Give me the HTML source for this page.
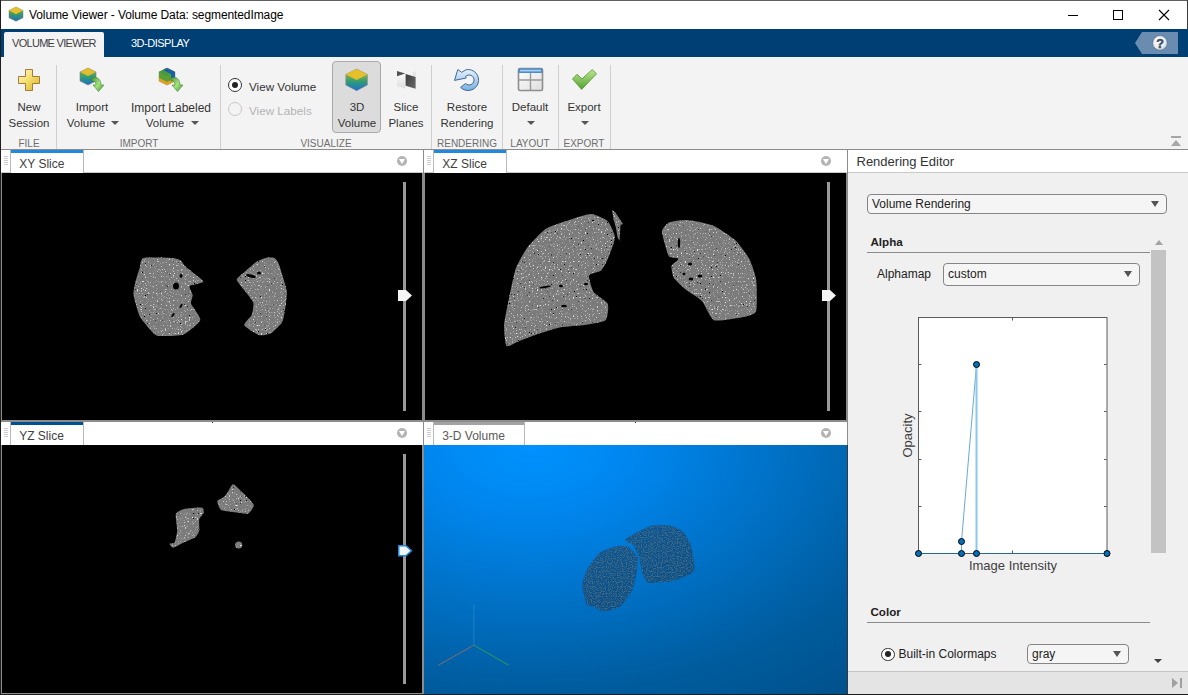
<!DOCTYPE html>
<html><head><meta charset="utf-8">
<style>
*{margin:0;padding:0;box-sizing:border-box}
html,body{width:1188px;height:695px;overflow:hidden;background:#fff;font-family:"Liberation Sans",sans-serif}
.a{position:absolute}
.t{position:absolute;white-space:nowrap;line-height:1}
.sep{position:absolute;width:1px;background:#cfcfcf;top:65px;height:84px}
.rl{position:absolute;white-space:nowrap;line-height:1;font-size:11.5px;color:#333;text-align:center}
.gl{position:absolute;white-space:nowrap;line-height:1;font-size:10px;color:#6e6e6e;text-align:center;letter-spacing:0}
.arr{position:absolute;width:0;height:0;border-left:4px solid transparent;border-right:4px solid transparent;border-top:4px solid #555}
.hdr{position:absolute;background:#fff;border-bottom:1px solid #c9c9c9}
.grip{position:absolute;width:4px;height:9px;background:repeating-linear-gradient(#cdcdcd 0 1px,transparent 1px 2px)}
.tab{position:absolute;background:#fff;border-left:1px solid #b9b9b9;border-right:1px solid #b9b9b9}
.tabbar{position:absolute;left:0;right:0;top:0;height:3px}
.ddc{position:absolute;width:10px;height:10px;border-radius:50%;background:#b4b4b4}
.ddc:after{content:"";position:absolute;left:2px;top:3px;border-left:3px solid transparent;border-right:3px solid transparent;border-top:5px solid #fff}
.trk{position:absolute;width:3px;background:#999}
</style></head>
<body>
<!-- window borders -->
<div class="a" style="left:0;top:0;width:1188px;height:1px;background:#5f5f5f"></div>
<div class="a" style="left:0;top:0;width:1px;height:695px;background:#1e1e1e"></div>
<div class="a" style="left:1187px;top:0;width:1px;height:29px;background:#3a3a3a"></div>
<div class="a" style="left:0;top:694px;width:1188px;height:1px;background:#1e1e1e"></div>

<!-- title bar -->
<svg class="a" style="left:8px;top:6px" width="16" height="16" viewBox="0 0 16 16">
 <defs>
  <linearGradient id="cg" x1="0" y1="0" x2="0" y2="1"><stop offset="0" stop-color="#7fb33a"/><stop offset="0.5" stop-color="#3a9a6a"/><stop offset="1" stop-color="#1a6fc0"/></linearGradient>
 </defs>
 <polygon points="8,1 15,4.6 15,11.8 8,15.2 1,11.8 1,4.6" fill="url(#cg)" stroke="#8a7a6a" stroke-width="0.5"/>
 <polygon points="8,1 15,4.6 8,8.3 1,4.6" fill="#e6bf2a"/>
</svg>
<div class="t" style="left:29px;top:8.6px;font-size:12px;color:#000;letter-spacing:-0.1px">Volume Viewer - Volume Data: segmentedImage</div>
<div class="a" style="left:1068px;top:15px;width:10px;height:1px;background:#000"></div>
<div class="a" style="left:1113px;top:10px;width:10px;height:10px;border:1px solid #000"></div>
<svg class="a" style="left:1158px;top:9px" width="12" height="12" viewBox="0 0 12 12"><path d="M1,1 L11,11 M11,1 L1,11" stroke="#000" stroke-width="1.1"/></svg>

<!-- tab strip -->
<div class="a" style="left:1px;top:29px;width:1187px;height:28px;background:#003f73"></div>
<div class="a" style="left:4px;top:32px;width:100px;height:25px;background:#f3f3f3;border-radius:2px 2px 0 0"></div>
<div class="t" style="left:12px;top:37.5px;font-size:11px;color:#404040;letter-spacing:-0.7px">VOLUME VIEWER</div>
<div class="t" style="left:131px;top:37.5px;font-size:11px;color:#fff;letter-spacing:-0.5px">3D-DISPLAY</div>
<svg class="a" style="left:1135px;top:32px" width="44" height="22" viewBox="0 0 44 22">
 <polygon points="0,11 7,0 43,0 43,22 7,22" fill="#6a8cb0"/>
 <defs><radialGradient id="hg" cx="0.4" cy="0.35" r="0.7"><stop offset="0" stop-color="#fff"/><stop offset="0.7" stop-color="#e8ecf0"/><stop offset="1" stop-color="#b8c4d0"/></radialGradient></defs>
 <circle cx="25" cy="11" r="7.2" fill="url(#hg)" stroke="#4a5a6a" stroke-width="0.4"/>
 <text x="25" y="15.5" font-family="Liberation Sans" font-weight="bold" font-size="12.5" fill="#3d4f66" stroke="#3d4f66" stroke-width="0.5" text-anchor="middle">?</text>
</svg>

<!-- ribbon -->
<div class="a" style="left:1px;top:57px;width:1187px;height:92px;background:#f3f3f3"></div>
<div class="a" style="left:1px;top:149px;width:1187px;height:1px;background:#8c8c8c"></div>
<!-- separators -->
<div class="sep" style="left:56px"></div>
<div class="sep" style="left:220px"></div>
<div class="sep" style="left:431px"></div>
<div class="sep" style="left:502px"></div>
<div class="sep" style="left:558px"></div>
<div class="sep" style="left:610px"></div>
<!-- 3D volume pressed button -->
<div class="a" style="left:332px;top:61px;width:49px;height:72px;background:#dcdcdc;border:1px solid #a9a9a9;border-radius:4px"></div>

<!-- labels -->
<div class="rl" style="left:-21px;width:100px;top:102.4px">New</div>
<div class="rl" style="left:-21px;width:100px;top:117.9px">Session</div>
<div class="gl" style="left:-21px;width:100px;top:138.6px">FILE</div>

<div class="rl" style="left:42px;width:100px;top:102.4px">Import</div>
<div class="rl" style="left:36px;width:100px;top:117.9px">Volume</div>
<div class="arr" style="left:111px;top:121px"></div>

<div class="rl" style="left:121px;width:100px;top:102.2px;font-size:12px">Import Labeled</div>
<div class="rl" style="left:115px;width:100px;top:117.9px">Volume</div>
<div class="arr" style="left:191px;top:121px"></div>
<div class="gl" style="left:89px;width:100px;top:138.6px">IMPORT</div>

<div class="a" style="left:228px;top:78px;width:14px;height:14px;border-radius:50%;border:1px solid #333;background:#fff"></div>
<div class="a" style="left:232px;top:82px;width:6px;height:6px;border-radius:50%;background:#222"></div>
<div class="t" style="left:249px;top:81.2px;font-size:11.7px;color:#333">View Volume</div>
<div class="a" style="left:228px;top:102px;width:14px;height:14px;border-radius:50%;border:1px solid #c8c8c8;background:#f3f3f3"></div>
<div class="t" style="left:249px;top:105px;font-size:11.7px;color:#b4b4b4">View Labels</div>

<div class="rl" style="left:307px;width:100px;top:102.4px">3D</div>
<div class="rl" style="left:307px;width:100px;top:117.9px">Volume</div>
<div class="rl" style="left:356px;width:100px;top:102.4px">Slice</div>
<div class="rl" style="left:356px;width:100px;top:117.9px">Planes</div>
<div class="gl" style="left:276px;width:100px;top:138.6px">VISUALIZE</div>

<div class="rl" style="left:417px;width:100px;top:102.4px">Restore</div>
<div class="rl" style="left:417px;width:100px;top:117.9px">Rendering</div>
<div class="gl" style="left:417px;width:100px;top:138.6px">RENDERING</div>

<div class="rl" style="left:480px;width:100px;top:102.4px">Default</div>
<div class="arr" style="left:527px;top:121px"></div>
<div class="gl" style="left:480px;width:100px;top:138.6px">LAYOUT</div>

<div class="rl" style="left:534px;width:100px;top:102.4px">Export</div>
<div class="arr" style="left:581px;top:121px"></div>
<div class="gl" style="left:534px;width:100px;top:138.6px">EXPORT</div>

<!-- collapse icon -->
<div class="a" style="left:1171px;top:136px;width:10px;height:2px;background:#a6a6a6"></div>
<div class="a" style="left:1171px;top:140px;border-left:5px solid transparent;border-right:5px solid transparent;border-bottom:6px solid #a6a6a6"></div>

<!-- icons -->
<svg class="a" style="left:17px;top:68px" width="24" height="24" viewBox="0 0 24 24">
 <defs><linearGradient id="pg" x1="0" y1="0" x2="1" y2="1"><stop offset="0" stop-color="#fffbe0"/><stop offset="0.45" stop-color="#f5e070"/><stop offset="1" stop-color="#d9b020"/></linearGradient></defs>
 <path d="M8.5,1.5 H15.5 V8.5 H22.5 V15.5 H15.5 V22.5 H8.5 V15.5 H1.5 V8.5 H8.5 Z" fill="url(#pg)" stroke="#a87a3a" stroke-width="1"/>
</svg>
<svg class="a" style="left:79px;top:66px" width="28" height="28" viewBox="0 0 28 28">
 <defs>
  <linearGradient id="cg2" x1="0" y1="0" x2="0" y2="1"><stop offset="0" stop-color="#8ab83a"/><stop offset="0.55" stop-color="#2f9a7a"/><stop offset="1" stop-color="#1a70c8"/></linearGradient>
  <linearGradient id="ag" x1="0" y1="0" x2="1" y2="1"><stop offset="0" stop-color="#4a9a3a"/><stop offset="0.5" stop-color="#a8e080"/><stop offset="1" stop-color="#3a9a2a"/></linearGradient>
 </defs>
 <polygon points="9,2 17,6 17,15 9,19 1,15 1,6" fill="url(#cg2)" stroke="#8a7a8a" stroke-width="0.6"/>
 <polygon points="9,2 17,6 9,10 1,6" fill="#e3bd2c"/>
 <path d="M13,12 C18,10 22,13 22,19 L25,19 L19.5,25.5 L14,19 L17,19 C17,16 15.5,14.5 13,15 Z" fill="url(#ag)" stroke="#3a8a2a" stroke-width="0.6"/>
</svg>
<svg class="a" style="left:158px;top:66px" width="28" height="28" viewBox="0 0 28 28">
 <polygon points="9,2 17,6 17,15 9,19 1,15 1,6" fill="#d07a1a" stroke="#a08070" stroke-width="0.5"/>
 <polygon points="9,2 17,6 17,12 9,16 1,12 1,6" fill="#5aa03a"/>
 <polygon points="9,2 17,6 9,10 1,6" fill="#4a9a3a"/>
 <polygon points="9,2 17,6 17,12 13,14 13,8 5,4" fill="#1b5fa8"/>
 <polygon points="1,12 9,16 17,12 17,15 9,19 1,15" fill="#e0a020"/>
 <path d="M13,12 C18,10 22,13 22,19 L25,19 L19.5,25.5 L14,19 L17,19 C17,16 15.5,14.5 13,15 Z" fill="url(#ag)" stroke="#3a8a2a" stroke-width="0.6"/>
</svg>
<svg class="a" style="left:345px;top:68px" width="24" height="24" viewBox="0 0 24 24">
 <defs><linearGradient id="cg3" x1="0" y1="0" x2="0" y2="1"><stop offset="0.2" stop-color="#8ab83a"/><stop offset="0.6" stop-color="#2f9a7a"/><stop offset="1" stop-color="#1a6ed0"/></linearGradient></defs>
 <polygon points="11.6,1 22.4,6.5 22.4,17 11.6,22.7 0.8,17 0.8,6.5" fill="url(#cg3)" stroke="#8a7a8a" stroke-width="0.5"/>
 <polygon points="11.6,1 22.4,6.5 11.6,12 0.8,6.5" fill="#e6bf2a"/>
</svg>
<svg class="a" style="left:395px;top:69px" width="22" height="22" viewBox="0 0 22 22">
 <defs><linearGradient id="sp1" x1="0" y1="0" x2="0" y2="1"><stop offset="0" stop-color="#ffffff"/><stop offset="1" stop-color="#dcdcdc"/></linearGradient>
 <linearGradient id="sp2" x1="0" y1="0" x2="1" y2="1"><stop offset="0" stop-color="#3c3c3c"/><stop offset="1" stop-color="#6a6a6a"/></linearGradient></defs>
 <polygon points="17.5,3 21,2.5 21,8.5 17.5,7.5" fill="#e6e6e6"/>
 <polygon points="2,2 10.2,4.5 10.2,19.5 2,17" fill="url(#sp1)"/>
 <polygon points="2,2 10.2,4.5 2,7.2" fill="#505050"/>
 <polygon points="10.6,5 20.6,8 20.6,19.7 10.6,16.7" fill="url(#sp2)"/>
</svg>
<svg class="a" style="left:453px;top:67px" width="27" height="26" viewBox="0 0 27 26">
 <defs><linearGradient id="rg" x1="0" y1="0" x2="0" y2="1"><stop offset="0" stop-color="#e8f2fb"/><stop offset="1" stop-color="#78b0e0"/></linearGradient></defs>
 <path d="M13.2,2.7 A10.5,10.5 0 1 1 7.6,20.4 L12.5,16.5 A5,5 0 1 0 12.5,9.5 L13.2,11 L1.5,13.4 L4.8,2.6 L8.6,5.3 Z" fill="url(#rg)" stroke="#3d6a9a" stroke-width="1" stroke-linejoin="round"/>
</svg>
<svg class="a" style="left:517px;top:67px" width="27" height="25" viewBox="0 0 27 25">
 <defs><linearGradient id="lg" x1="0" y1="0" x2="1" y2="1"><stop offset="0" stop-color="#ffffff"/><stop offset="1" stop-color="#dedede"/></linearGradient></defs>
 <rect x="1.5" y="1.5" width="24" height="22" rx="1.5" fill="url(#lg)" stroke="#8e8e8e" stroke-width="1.6"/>
 <rect x="1.5" y="1.5" width="24" height="4.5" fill="#4d8ccc"/>
 <rect x="3" y="2.8" width="21" height="1.6" fill="#a8d0f0"/>
 <path d="M13.5,6 V23 M1.5,13 H25.5" stroke="#9a9a9a" stroke-width="1.4"/>
</svg>
<svg class="a" style="left:571px;top:68px" width="27" height="23" viewBox="0 0 27 23">
 <defs><linearGradient id="kg" x1="0" y1="0" x2="0" y2="1"><stop offset="0" stop-color="#c0e890"/><stop offset="1" stop-color="#4fa02f"/></linearGradient></defs>
 <path d="M1.5,10.9 L6,6.3 L11,10.9 L21.2,1.6 L25.5,5.8 L10.6,21.4 Z" fill="url(#kg)" stroke="#5a9a3a" stroke-width="0.9" stroke-linejoin="round"/>
</svg>

<!-- panels -->
<div class="a" style="left:1px;top:150px;width:847px;height:544px;background:#8c8c8c"></div>
<!-- headers top -->
<div class="hdr" style="left:1px;top:150px;width:422px;height:23px"></div>
<div class="hdr" style="left:424px;top:150px;width:423px;height:23px"></div>
<!-- headers bottom -->
<div class="hdr" style="left:1px;top:422px;width:422px;height:23px;border-bottom:0"></div>
<div class="hdr" style="left:424px;top:422px;width:423px;height:23px;border-bottom:0"></div>
<!-- image areas -->
<div class="a" id="xy" style="left:2px;top:173px;width:420px;height:247px;background:#000"></div>
<div class="a" id="xz" style="left:425px;top:173px;width:421px;height:247px;background:#000"></div>
<div class="a" id="yz" style="left:2px;top:445px;width:420px;height:248px;background:#000"></div>
<div class="a" id="v3" style="left:424px;top:445px;width:423px;height:249px;background:radial-gradient(ellipse 540px 340px at 105px 0px,#0092ff 0%,#0086ee 20%,#0072c8 45%,#005c9e 72%,#004e86 100%)"></div>
<div class="a" style="left:847px;top:445px;width:1px;height:249px;background:#303a44"></div>
<div class="a" style="left:212px;top:422px;width:1px;height:1px;background:#333"></div>
<div class="a" style="left:635px;top:422px;width:1px;height:1px;background:#333"></div>
<svg class="a" style="left:0;top:0" width="848" height="695" viewBox="0 0 848 695">
 <defs>
  <filter id="spk" x="0" y="0" width="100%" height="100%">
   <feTurbulence type="fractalNoise" baseFrequency="0.75" numOctaves="1" seed="7" result="n"/>
   <feColorMatrix in="n" type="matrix" values="0 0 0 0 0.82  0 0 0 0 0.82  0 0 0 0 0.82  6 0 0 0 -3.55" result="w"/>
   <feComposite in="w" in2="SourceGraphic" operator="in"/>
  </filter>
  <filter id="dspk" x="0" y="0" width="100%" height="100%">
   <feTurbulence type="fractalNoise" baseFrequency="0.8" numOctaves="1" seed="11" result="n"/>
   <feColorMatrix in="n" type="matrix" values="0 0 0 0 0.06  0 0 0 0 0.14  0 0 0 0 0.22  -6 0 0 0 3.2" result="w"/>
   <feComposite in="w" in2="SourceGraphic" operator="in"/>
  </filter>
  <filter id="kspk" x="0" y="0" width="100%" height="100%">
   <feTurbulence type="fractalNoise" baseFrequency="0.55" numOctaves="2" seed="23" result="n"/>
   <feColorMatrix in="n" type="matrix" values="0 0 0 0 0  0 0 0 0 0  0 0 0 0 0  -14 0 0 0 3.5" result="w"/>
   <feComposite in="w" in2="SourceGraphic" operator="in"/>
  </filter>
  <filter id="bspk" x="0" y="0" width="100%" height="100%">
   <feTurbulence type="fractalNoise" baseFrequency="0.7" numOctaves="1" seed="5" result="n"/>
   <feColorMatrix in="n" type="matrix" values="0 0 0 0 0.05  0 0 0 0 0.32  0 0 0 0 0.6  6 0 0 0 -3.6" result="w"/>
   <feComposite in="w" in2="SourceGraphic" operator="in"/>
  </filter>
  <g id="lungs">
   <path d="M143.5,257.9 C146.5,257.0 168.0,257.7 171.5,257.9 C175.0,258.1 179.3,259.4 180.6,260.2 C181.9,261.0 183.1,264.2 185.2,266.2 C187.3,268.2 202.9,279.6 203.3,281.4 C203.7,283.2 190.7,284.6 189.7,285.9 C188.7,287.2 192.6,293.3 192.7,295.0 C192.8,296.7 190.5,301.8 191.2,304.1 C191.9,306.4 201.0,317.2 200.3,320.0 C199.6,322.8 187.6,332.9 183.6,334.4 C179.6,335.9 161.0,336.3 157.9,335.9 C154.8,335.5 152.0,331.6 150.3,329.8 C148.6,328.0 141.3,319.4 139.7,316.2 C138.1,313.0 134.0,298.1 133.6,295.0 C133.2,291.9 134.6,285.4 135.2,282.9 C135.8,280.4 138.9,270.0 139.7,267.7 C140.5,265.4 140.5,258.8 143.5,257.9Z"/>
   <path d="M265.5,257.9 C267.2,257.5 273.2,257.3 274.5,257.9 C275.8,258.5 278.0,261.7 279.1,264.7 C280.2,267.7 286.1,286.4 286.7,290.5 C287.3,294.6 285.6,305.6 285.2,308.6 C284.8,311.6 283.4,320.0 282.1,322.3 C280.8,324.6 273.6,331.7 271.5,332.9 C269.4,334.1 261.9,335.9 259.4,335.2 C256.9,334.5 244.9,327.2 244.2,325.3 C243.5,323.4 251.0,316.8 251.8,314.7 C252.6,312.6 253.9,304.7 253.3,302.6 C252.7,300.5 247.3,294.1 245.8,292.0 C244.3,289.9 236.8,281.6 236.7,279.8 C236.6,278.0 242.4,274.0 244.2,272.3 C246.0,270.6 254.4,263.0 256.4,261.7 C258.4,260.4 263.8,258.3 265.5,257.9Z"/>
   <path d="M506.5,346.1 C505.2,344.6 503.9,329.3 504.1,324.9 C504.3,320.5 507.8,304.3 508.9,299.0 C510.0,293.7 514.1,273.1 515.9,268.3 C517.7,263.5 524.8,250.8 527.7,247.1 C530.6,243.4 542.4,230.9 546.6,228.3 C550.8,225.7 568.3,220.2 572.5,218.9 C576.7,217.6 588.0,213.9 591.3,214.1 C594.6,214.3 605.6,219.0 607.8,221.2 C610.0,223.4 614.9,234.2 614.9,237.7 C614.9,241.2 609.1,255.8 607.8,258.9 C606.5,262.0 602.6,269.2 600.8,270.7 C599.0,272.2 589.7,273.4 589.0,275.4 C588.3,277.4 591.9,289.3 593.7,291.9 C595.5,294.5 606.7,301.1 607.8,303.7 C608.9,306.3 607.7,318.2 605.5,320.2 C603.3,322.2 588.5,324.2 584.3,324.9 C580.1,325.6 565.1,326.4 560.7,327.3 C556.3,328.2 541.1,333.0 537.1,334.3 C533.1,335.6 521.2,340.3 518.3,341.4 C515.4,342.5 507.8,347.6 506.5,346.1Z"/>
   <polygon points="612,210 615.5,212.5 619,218 623,224 620.5,225 620,233 619.5,241 617.5,237 616,228 613.5,219"/>
   <path d="M662.1,230.6 C662.5,228.7 666.7,223.4 669.1,222.4 C671.5,221.4 683.8,219.7 688.0,220.0 C692.2,220.3 709.5,224.0 713.9,225.9 C718.3,227.8 731.8,237.0 735.1,240.1 C738.4,243.2 747.3,255.2 749.3,258.9 C751.3,262.6 755.6,275.3 756.3,280.1 C757.0,284.9 757.0,307.5 756.3,310.8 C755.6,314.1 750.8,314.8 749.3,315.5 C747.8,316.2 743.1,317.4 739.8,317.8 C736.5,318.2 717.4,321.7 713.9,320.2 C710.4,318.7 704.7,304.2 702.1,301.3 C699.5,298.4 688.2,291.8 685.6,289.6 C683.0,287.4 675.1,280.0 673.8,277.8 C672.5,275.6 671.1,267.8 671.5,266.0 C671.9,264.2 678.7,259.8 678.5,258.9 C678.3,258.0 670.4,258.1 669.1,256.6 C667.8,255.1 665.1,244.8 664.4,242.4 C663.7,240.0 661.7,232.5 662.1,230.6Z"/>
   <path d="M169.4,543.8 C169.5,543.3 173.9,543.7 174.6,542.5 C175.3,541.3 177.1,533.5 177.2,530.8 C177.3,528.1 175.2,516.1 175.9,514.0 C176.6,511.9 182.6,509.4 185.0,508.8 C187.4,508.2 200.1,507.1 201.8,507.5 C203.5,507.9 203.9,511.6 203.7,512.7 C203.5,513.8 199.6,517.5 199.2,519.2 C198.8,520.9 199.6,529.1 199.2,530.8 C198.8,532.5 196.7,536.2 195.3,537.3 C193.9,538.4 185.8,541.5 183.7,542.5 C181.6,543.5 174.6,547.6 173.3,547.7 C172.0,547.8 169.3,544.3 169.4,543.8Z"/>
   <path d="M232.8,484.2 C233.8,483.8 236.1,486.2 238.0,488.1 C239.9,490.0 252.6,501.9 253.6,504.3 C254.6,506.7 249.9,512.6 248.4,513.4 C246.9,514.2 240.5,513.0 238.0,512.7 C235.5,512.4 223.1,511.2 221.2,510.1 C219.3,509.0 217.1,502.3 217.3,501.1 C217.5,499.9 222.8,498.0 223.8,497.2 C224.8,496.4 226.9,493.2 227.7,492.0 C228.5,490.8 231.8,484.6 232.8,484.2Z"/>
   <circle cx="238.7" cy="545" r="3.6"/>
  </g>
  <g id="v3d">
   <path d="M586.9,604.9 C585.9,603.0 582.2,589.2 582.2,586.0 C582.2,582.8 585.3,573.2 586.9,570.1 C588.5,567.0 596.9,554.9 599.6,552.7 C602.3,550.5 612.7,547.0 615.4,546.4 C618.1,545.8 625.9,545.4 628.0,546.4 C630.1,547.4 636.8,554.7 637.5,557.5 C638.2,560.3 636.6,573.3 636.0,576.5 C635.4,579.7 632.7,589.5 631.2,592.3 C629.7,595.1 622.6,604.7 620.1,606.5 C617.6,608.3 606.8,611.3 604.3,611.3 C601.8,611.3 594.8,607.1 593.2,606.5 C591.6,605.9 587.9,606.8 586.9,604.9Z"/>
   <path d="M624.9,540.1 C625.0,539.1 631.9,535.0 634.4,533.7 C636.9,532.4 648.4,526.5 651.8,525.8 C655.2,525.1 667.9,525.2 670.8,525.8 C673.7,526.4 681.5,530.3 683.4,532.2 C685.3,534.1 690.3,542.9 691.3,546.4 C692.3,549.9 695.1,567.3 694.5,570.1 C693.9,572.9 687.2,575.5 685.0,576.5 C682.8,577.5 674.2,580.6 670.8,581.2 C667.4,581.8 651.3,583.5 648.6,582.8 C645.9,582.1 643.2,575.7 642.3,573.3 C641.4,570.9 640.0,560.2 639.1,557.5 C638.2,554.8 634.1,546.4 632.8,544.8 C631.5,543.2 624.8,541.1 624.9,540.1Z"/>
  </g>
 </defs>
 <use href="#lungs" fill="#7b7b7b"/>
 <use href="#lungs" fill="#fff" filter="url(#spk)"/>
 <use href="#lungs" fill="#fff" filter="url(#kspk)"/>
 <g fill="#000">
  <ellipse cx="176" cy="286" rx="3" ry="3.5"/>
  <ellipse cx="181" cy="276" rx="1.5" ry="2"/>
  <ellipse cx="181" cy="306" rx="1" ry="2.5" transform="rotate(30 181 306)"/>
  <ellipse cx="173" cy="315" rx="1" ry="2.5" transform="rotate(35 173 315)"/>
  <ellipse cx="251" cy="276" rx="5" ry="1.5" transform="rotate(15 251 276)"/>
  <ellipse cx="259" cy="273" rx="2" ry="1.5"/>
  <ellipse cx="615" cy="270" rx="1.5" ry="2.5"/>
  <ellipse cx="586" cy="284" rx="2" ry="1.2"/>
  <ellipse cx="561" cy="286" rx="2" ry="1.2"/>
  <ellipse cx="545" cy="287" rx="6" ry="1" transform="rotate(-10 545 287)"/>
  <ellipse cx="564" cy="306" rx="3" ry="1.3"/>
  <ellipse cx="679" cy="243" rx="1.2" ry="5"/>
  <ellipse cx="690" cy="264" rx="2" ry="1.5"/>
  <ellipse cx="691" cy="279" rx="2.5" ry="1.5"/>
  <ellipse cx="700" cy="276" rx="2.5" ry="1.5"/>
  <ellipse cx="684" cy="274" rx="1.5" ry="1.2"/>
 </g>
 <use href="#v3d" fill="#12304e" fill-opacity="0.5"/>
 <use href="#v3d" filter="url(#dspk)" fill="#000"/>
 <path d="M473.9,645.1 V604.4" stroke="#4aa3e8" stroke-width="1" stroke-opacity="0.4"/>
 <path d="M473.9,645.1 L438.2,665.3" stroke="#8a6a66" stroke-width="1"/>
 <path d="M473.9,645.1 L508.7,665.3" stroke="#2f9a5a" stroke-width="1"/>
</svg>

<!-- grips & tabs -->
<div class="grip" style="left:4px;top:156px"></div>
<div class="tab" style="left:10px;top:150px;width:74px;height:23px"><div class="tabbar" style="background:#2088dd"></div></div>
<div class="t" style="left:19.3px;top:157.9px;font-size:12px;color:#404040">XY Slice</div>
<div class="ddc" style="left:397px;top:156px"></div>

<div class="grip" style="left:427px;top:156px"></div>
<div class="tab" style="left:433px;top:150px;width:74px;height:23px"><div class="tabbar" style="background:#2088dd"></div></div>
<div class="t" style="left:442.3px;top:157.9px;font-size:12px;color:#404040">XZ Slice</div>
<div class="ddc" style="left:821px;top:156px"></div>

<div class="grip" style="left:4px;top:428px"></div>
<div class="tab" style="left:10px;top:422px;width:74px;height:23px"><div class="tabbar" style="background:#004f90"></div></div>
<div class="t" style="left:19.2px;top:430px;font-size:12px;color:#404040">YZ Slice</div>
<div class="ddc" style="left:397px;top:428px"></div>

<div class="grip" style="left:427px;top:428px"></div>
<div class="tab" style="left:433px;top:422px;width:92px;height:23px"><div class="tabbar" style="background:#a3a3a3"></div></div>
<div class="t" style="left:442.2px;top:429.9px;font-size:12px;color:#5a5a5a">3-D Volume</div>
<div class="ddc" style="left:821px;top:428px"></div>

<!-- sliders -->
<div class="trk" style="left:403px;top:182px;height:229px"></div>
<svg class="a" style="left:398px;top:290px" width="15" height="12" viewBox="0 0 15 12"><polygon points="0,0 8,0 14,5.5 8,11 0,11" fill="#f5f5f5"/></svg>
<div class="trk" style="left:827px;top:182px;height:229px"></div>
<svg class="a" style="left:822px;top:290px" width="15" height="12" viewBox="0 0 15 12"><polygon points="0,0 8,0 14,5.5 8,11 0,11" fill="#f5f5f5"/></svg>
<div class="trk" style="left:403px;top:454px;height:230px"></div>
<svg class="a" style="left:398px;top:545px" width="15" height="12" viewBox="0 0 15 12"><polygon points="0.75,0.75 8,0.75 13.4,5.75 8,10.75 0.75,10.75" fill="#f5f5f5" stroke="#1a8ae0" stroke-width="1.5"/></svg>

<!-- rendering editor -->
<div class="a" style="left:848px;top:150px;width:340px;height:544px;background:#f0f0f0"></div>
<div class="a" style="left:848px;top:150px;width:340px;height:23px;background:#fff;border-bottom:1px solid #c8c8c8"></div>
<div class="t" style="left:856.5px;top:154.9px;font-size:13px;color:#333">Rendering Editor</div>
<!-- volume rendering dropdown -->
<div class="a" style="left:867px;top:194px;width:300px;height:20px;background:#f5f5f5;border:1px solid #858585;border-radius:4px"></div>
<div class="t" style="left:872px;top:197.8px;font-size:12px;color:#222">Volume Rendering</div>
<div class="a" style="left:1151px;top:200.5px;border-left:4px solid transparent;border-right:4px solid transparent;border-top:6px solid #555"></div>
<!-- alpha -->
<div class="t" style="left:870.5px;top:236.4px;font-size:11.6px;font-weight:bold;color:#222">Alpha</div>
<div class="a" style="left:867px;top:252px;width:283px;height:1px;background:#8a8a8a"></div>
<!-- scrollbar -->
<div class="a" style="left:1154.5px;top:239.5px;border-left:4px solid transparent;border-right:4px solid transparent;border-bottom:5px solid #a4a4a4"></div>
<div class="a" style="left:1151px;top:250px;width:15px;height:303px;background:#c3c3c3"></div>
<div class="a" style="left:1154px;top:659px;border-left:4.5px solid transparent;border-right:4.5px solid transparent;border-top:4.5px solid #404040"></div>
<!-- alphamap -->
<div class="t" style="left:877px;top:268.3px;font-size:12px;color:#222">Alphamap</div>
<div class="a" style="left:943px;top:263px;width:197px;height:23px;background:#f5f5f5;border:1px solid #858585;border-radius:4px"></div>
<div class="t" style="left:948px;top:267.5px;font-size:12px;color:#222">custom</div>
<div class="a" style="left:1124px;top:270.5px;border-left:4px solid transparent;border-right:4px solid transparent;border-top:6px solid #555"></div>
<!-- chart -->
<svg class="a" style="left:880px;top:300px" width="260" height="290" viewBox="880 300 260 290">
 <rect x="918.5" y="317.5" width="188.5" height="236" fill="#fff" stroke="#262626" stroke-width="1" stroke-opacity="0.75"/>
 <g stroke="#262626" stroke-width="1" stroke-opacity="0.75">
  <path d="M919,364.5 h2.5 M919,411.5 h2.5 M919,459.5 h2.5 M919,506.5 h2.5"/>
  <path d="M1106.5,364.5 h-2.5 M1106.5,411.5 h-2.5 M1106.5,459.5 h-2.5 M1106.5,506.5 h-2.5"/>
  <path d="M1012.5,318 v2.5 M1012.5,553 v-2.5"/>
 </g>
 <path d="M918.5,553.5 H961.5 V541.5 L976.5,364.5 V553.5 H1107" fill="none" stroke="#0072bd" stroke-width="1" stroke-opacity="0.6"/>
 <path d="M976.5,366 V552" stroke="#8cc4ea" stroke-width="2"/>
 <g fill="#0072bd" stroke="#000" stroke-width="1">
  <circle cx="918.5" cy="553.5" r="3"/>
  <circle cx="961.5" cy="553.5" r="3"/>
  <circle cx="961.5" cy="541.5" r="3"/>
  <circle cx="976.5" cy="364.5" r="3"/>
  <circle cx="976.5" cy="553.5" r="3"/>
  <circle cx="1107" cy="553.5" r="3"/>
 </g>
 <text x="1013" y="570" font-family="Liberation Sans" font-size="13" fill="#404040" text-anchor="middle">Image Intensity</text>
 <text transform="translate(912,435.5) rotate(-90)" font-family="Liberation Sans" font-size="13" fill="#404040" text-anchor="middle">Opacity</text>
</svg>
<!-- color -->
<div class="t" style="left:870.5px;top:605.9px;font-size:11.6px;font-weight:bold;color:#222">Color</div>
<div class="a" style="left:867px;top:622px;width:283px;height:1px;background:#8a8a8a"></div>
<div class="a" style="left:881px;top:647.5px;width:13.5px;height:13.5px;border-radius:50%;border:1px solid #333;background:#fff"></div>
<div class="a" style="left:884.8px;top:651.3px;width:6px;height:6px;border-radius:50%;background:#222"></div>
<div class="t" style="left:898.5px;top:647.8px;font-size:12px;color:#222">Built-in Colormaps</div>
<div class="a" style="left:1027px;top:644px;width:102px;height:20px;background:#f5f5f5;border:1px solid #858585;border-radius:4px"></div>
<div class="t" style="left:1032px;top:648px;font-size:12px;color:#222">gray</div>
<div class="a" style="left:1113px;top:650.5px;border-left:4px solid transparent;border-right:4px solid transparent;border-top:6px solid #555"></div>
<!-- status bar -->
<div class="a" style="left:848px;top:671px;width:340px;height:1px;background:#c4c4c4"></div>
<div class="a" style="left:848px;top:672px;width:340px;height:22px;background:#e4e4e4"></div>
<div class="a" style="left:1172px;top:678px;border-top:5px solid transparent;border-bottom:5px solid transparent;border-left:6px solid #a0a0a0"></div>
<div class="a" style="left:1180px;top:678px;width:2px;height:10px;background:#a0a0a0"></div>
</body></html>
